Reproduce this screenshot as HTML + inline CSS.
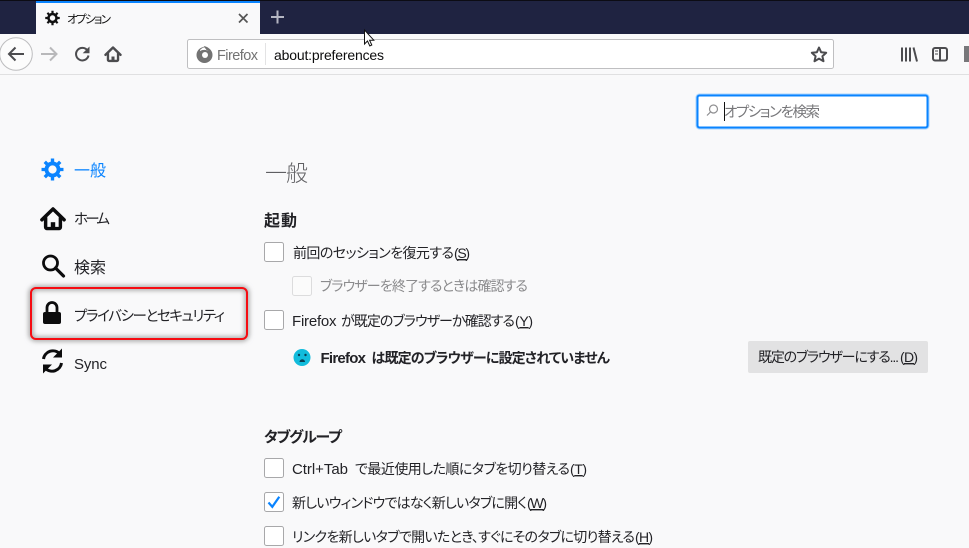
<!DOCTYPE html>
<html lang="ja"><head><meta charset="utf-8"><title>オプション</title>
<style>
html,body{margin:0;padding:0;background:#f9f9fa;overflow:hidden}
svg{display:block}
text{font-family:"Liberation Sans","Noto Sans CJK JP",sans-serif;font-size:14px;fill:#222226;font-feature-settings:"palt"}
.u{text-decoration:underline}
.b{font-weight:700}
.l{font-size:15px}
</style></head><body>
<svg xmlns="http://www.w3.org/2000/svg" width="969" height="548" viewBox="0 0 969 548">
<defs>
<filter id="blur" x="-20%" y="-40%" width="140%" height="180%"><feGaussianBlur stdDeviation="2.500"/></filter>
<clipPath id="nobox"><rect x="22" y="280" width="234" height="70"/></clipPath>
<g id="gear">
<circle r="5.400" fill="none" stroke-width="3.400" stroke="currentColor"/>
<path d="M0-9.800V-5.500M0 9.800V5.500M-9.800 0H-5.500M9.800 0H5.500M-6.900-6.900-3.900-3.900M6.900 6.900 3.900 3.900M-6.900 6.900-3.900 3.900M6.900-6.900 3.900-3.900" fill="none" stroke="currentColor" stroke-width="3"/>
</g>
<g id="home">
<path d="M-9 1 0-7.700 9 1" fill="none" stroke="currentColor" stroke-width="2.900" stroke-linejoin="round" stroke-linecap="round"/>
<path d="M-6-1V7a1.200 1.200 0 0 0 1.200 1.200H4.800A1.200 1.200 0 0 0 6 7V-1" fill="none" stroke="currentColor" stroke-width="2.800"/>
<rect x="-1.800" y="3" width="3.600" height="5.500" fill="currentColor"/>
</g>
</defs>

<!-- title bar -->
<rect width="969" height="34" fill="#1f2341"/>
<rect width="969" height="1" fill="#0c0c14"/>
<rect x="36" y="1" width="224" height="33" fill="#f9f9fa"/>
<rect x="36" y="1" width="224" height="2" fill="#0a84ff"/>
<use href="#gear" transform="translate(52.500 18) scale(.74)" style="color:#111"/>
<text x="67" y="23" textLength="44" style="font-size:11.500px;fill:#111">オプション</text>
<path d="M239 14l8.500 8.500M247.500 14l-8.500 8.500" stroke="#555" stroke-width="1.700" fill="none"/>
<path d="M277.500 10.500v13M271 17h13" stroke="#b4b6c2" stroke-width="2" fill="none"/>

<!-- toolbar -->
<rect y="34" width="969" height="40" fill="#f9f9fa"/>
<rect y="74" width="969" height="1" fill="#e0e0e1"/>
<circle cx="16" cy="54" r="16.300" fill="#fcfcfc" stroke="#bdbdbf" stroke-width="1"/>
<path d="M9 54h15M15.500 47.500 9 54l6.500 6.500" fill="none" stroke="#4c4c4f" stroke-width="2"/>
<path d="M41 54h15M50 47.500l6.500 6.500-6.500 6.500" fill="none" stroke="#b8b8ba" stroke-width="2"/>
<path d="M87.500 50.500a6.300 6.300 0 1 0 1 5" fill="none" stroke="#4c4c4f" stroke-width="2"/>
<path d="M89.500 46.500v6.800h-6.800z" fill="#4c4c4f"/>
<use href="#home" transform="translate(113 54) scale(.84)" style="color:#4c4c4f"/>
<rect x="187.500" y="39.500" width="646" height="29" rx="2" fill="#fff" stroke="#bfbfc1"/>
<circle cx="204.500" cy="55" r="8" fill="#737373"/>
<circle cx="205" cy="55" r="3" fill="#fff"/>
<path d="M200 50q3-3 6-2.500l3 3-2-.2q-4-1-7 .7z" fill="#fff"/>
<path d="M203.500 46q5 .5 7.500 5l-4.500-1z" fill="#737373"/>
<text x="217" y="60" textLength="41" style="font-size:14.500px;fill:#737373">Firefox</text>
<rect x="265" y="43" width="1" height="22" fill="#e3e3e4"/>
<text x="274" y="60" textLength="110" style="font-size:14px;fill:#0c0c0d">about:preferences</text>
<path d="M819 47.500l2.100 4.700 5.100.6-3.800 3.400 1.100 5-4.500-2.600-4.500 2.600 1.100-5-3.800-3.400 5.100-.6z" fill="none" stroke="#4c4c4f" stroke-width="2" stroke-linejoin="round"/>
<path d="M902 47.500v14M906 47.500v14M910 47.500v14M913.500 47.500l3.500 14" fill="none" stroke="#4c4c4f" stroke-width="2"/>
<rect x="933" y="48" width="14" height="12.500" rx="2" fill="none" stroke="#4c4c4f" stroke-width="2"/>
<path d="M940 48v12" stroke="#4c4c4f" stroke-width="2"/>
<path d="M935 51h3M935 54h3" stroke="#4c4c4f" stroke-width="1"/>
<rect x="964" y="46" width="5" height="16" fill="#77777a"/>

<!-- mouse cursor -->
<path d="M364.500 30v14l3-3 2.300 5 2-1-2.200-4.800h4.200z" fill="#fff" stroke="#111" stroke-width="1"/>

<!-- search -->
<rect x="695.500" y="93.500" width="234" height="36" rx="4" fill="#a9d5ff"/>
<rect x="697.500" y="95.500" width="230" height="32" rx="2" fill="#fff" stroke="#0a84ff" stroke-width="2"/>
<circle cx="713.500" cy="109" r="4" fill="none" stroke="#8e8e90" stroke-width="1.200"/>
<path d="M710.500 112l-3.500 3.500" stroke="#8e8e90" stroke-width="1.200"/>
<rect x="724" y="102" width="1" height="19" fill="#111"/>
<text x="724" y="117" textLength="96" style="font-size:14.500px;fill:#77777a">オプションを検索</text>

<!-- sidebar -->
<use href="#gear" transform="translate(52.500 169.500) scale(1.120)" style="color:#0a84ff"/>
<text x="74" y="176" textLength="32" style="font-size:16px;fill:#0a84ff">一般</text>
<use href="#home" transform="translate(53 218.500) scale(1.230)" style="color:#0c0c0d"/>
<text x="74" y="224" textLength="36" style="font-size:14.500px">ホーム</text>
<circle cx="50.500" cy="263" r="7" fill="none" stroke="#0c0c0d" stroke-width="2.800"/>
<path d="M55.500 268l8 8" stroke="#0c0c0d" stroke-width="3.200" stroke-linecap="round"/>
<text x="74" y="273" textLength="32" style="font-size:16px">検索</text>

<!-- highlighted row with soft shadow hugging the red frame -->
<g clip-path="url(#nobox)"><rect x="31" y="288" width="216" height="51" rx="5" fill="none" stroke="#a8a8a8" stroke-width="5" filter="url(#blur)"/></g>
<rect x="31" y="288" width="216" height="51" rx="5" fill="none" stroke="#f60c12" stroke-width="2"/>
<rect x="43" y="312" width="18" height="12" rx="2" fill="#0c0c0d"/>
<path d="M47 313v-5.500a5 5 0 0 1 10 0V313" fill="none" stroke="#0c0c0d" stroke-width="2.800"/>
<text x="74" y="321" textLength="151" style="font-size:14.500px">プライバシーとセキュリティ</text>

<g transform="translate(0 -2)">
<path d="M43.500 361a9.500 9.500 0 0 1 16-5.500" fill="none" stroke="#0c0c0d" stroke-width="3"/>
<path d="M62 350.500v9h-9z" fill="#0c0c0d"/>
<path d="M61.500 365a9.500 9.500 0 0 1-16 5.500" fill="none" stroke="#0c0c0d" stroke-width="3"/>
<path d="M43 375.500v-9h9z" fill="#0c0c0d"/>
</g>
<text x="74" y="369" textLength="33" style="font-size:15px">Sync</text>

<!-- main -->
<text x="265" y="181" textLength="43" style="font-size:22px;fill:#5f5f62;font-weight:300">一般</text>
<text x="264" y="226" textLength="33" class="b" style="font-size:16px">起動</text>

<rect x="264.500" y="242.500" width="19" height="19" rx="2" fill="#fff" stroke="#a8a8aa"/>
<text x="293" y="258" textLength="161">前回のセッションを復元する</text>
<text x="454" y="258" textLength="16">(<tspan class="u">S</tspan>)</text>

<rect x="292.500" y="276.500" width="19" height="19" rx="2" fill="#fbfbfb" stroke="#dcdcdd"/>
<text x="320" y="291" textLength="208" style="fill:#8b8b8d">ブラウザーを終了するときは確認する</text>

<rect x="264.500" y="310.500" width="19" height="19" rx="2" fill="#fff" stroke="#a8a8aa"/>
<text x="292" y="326" textLength="44.500" class="l">Firefox</text>
<text x="341" y="326" textLength="174">が既定のブラウザーか確認する</text>
<text x="515" y="326" textLength="18">(<tspan class="u">Y</tspan>)</text>

<circle cx="302" cy="357.500" r="8.500" fill="#12bcdc"/>
<circle cx="299" cy="355" r="1.200" fill="#0a3f55"/><circle cx="305.500" cy="355" r="1.200" fill="#0a3f55"/>
<path d="M299.500 362a2.700 2.700 0 0 1 5.500 0z" fill="#0a3f55"/>
<text x="320.500" y="363" textLength="45.500" class="b l">Firefox</text>
<text x="371.500" y="363" textLength="238.500" class="b">は既定のブラウザーに設定されていません</text>

<rect x="748" y="341" width="180" height="32" rx="2" fill="#e2e2e3"/>
<text x="758" y="362" textLength="141">既定のブラウザーにする...</text>
<text x="900" y="362" textLength="18">(<tspan class="u">D</tspan>)</text>

<text x="264" y="442" textLength="78" class="b" style="font-size:15px">タブグループ</text>

<rect x="264.500" y="458.500" width="19" height="19" rx="2" fill="#fff" stroke="#a8a8aa"/>
<text x="292" y="474" textLength="56" class="l">Ctrl+Tab</text>
<text x="355" y="474" textLength="215">で最近使用した順にタブを切り替える</text>
<text x="570" y="474" textLength="17">(<tspan class="u">T</tspan>)</text>

<rect x="264.500" y="492.500" width="19" height="19" rx="2" fill="#fff" stroke="#a8a8aa"/>
<path d="M268.500 502.500l3.800 4.300 7-10" fill="none" stroke="#0a84ff" stroke-width="2.200"/>
<text x="292" y="508" textLength="235">新しいウィンドウではなく新しいタブに開く</text>
<text x="527" y="508" textLength="20">(<tspan class="u">W</tspan>)</text>

<rect x="264.500" y="526.500" width="19" height="19" rx="2" fill="#fff" stroke="#a8a8aa"/>
<text x="292" y="542" textLength="343">リンクを新しいタブで開いたとき、すぐにそのタブに切り替える</text>
<text x="635" y="542" textLength="18">(<tspan class="u">H</tspan>)</text>
</svg>
</body></html>
